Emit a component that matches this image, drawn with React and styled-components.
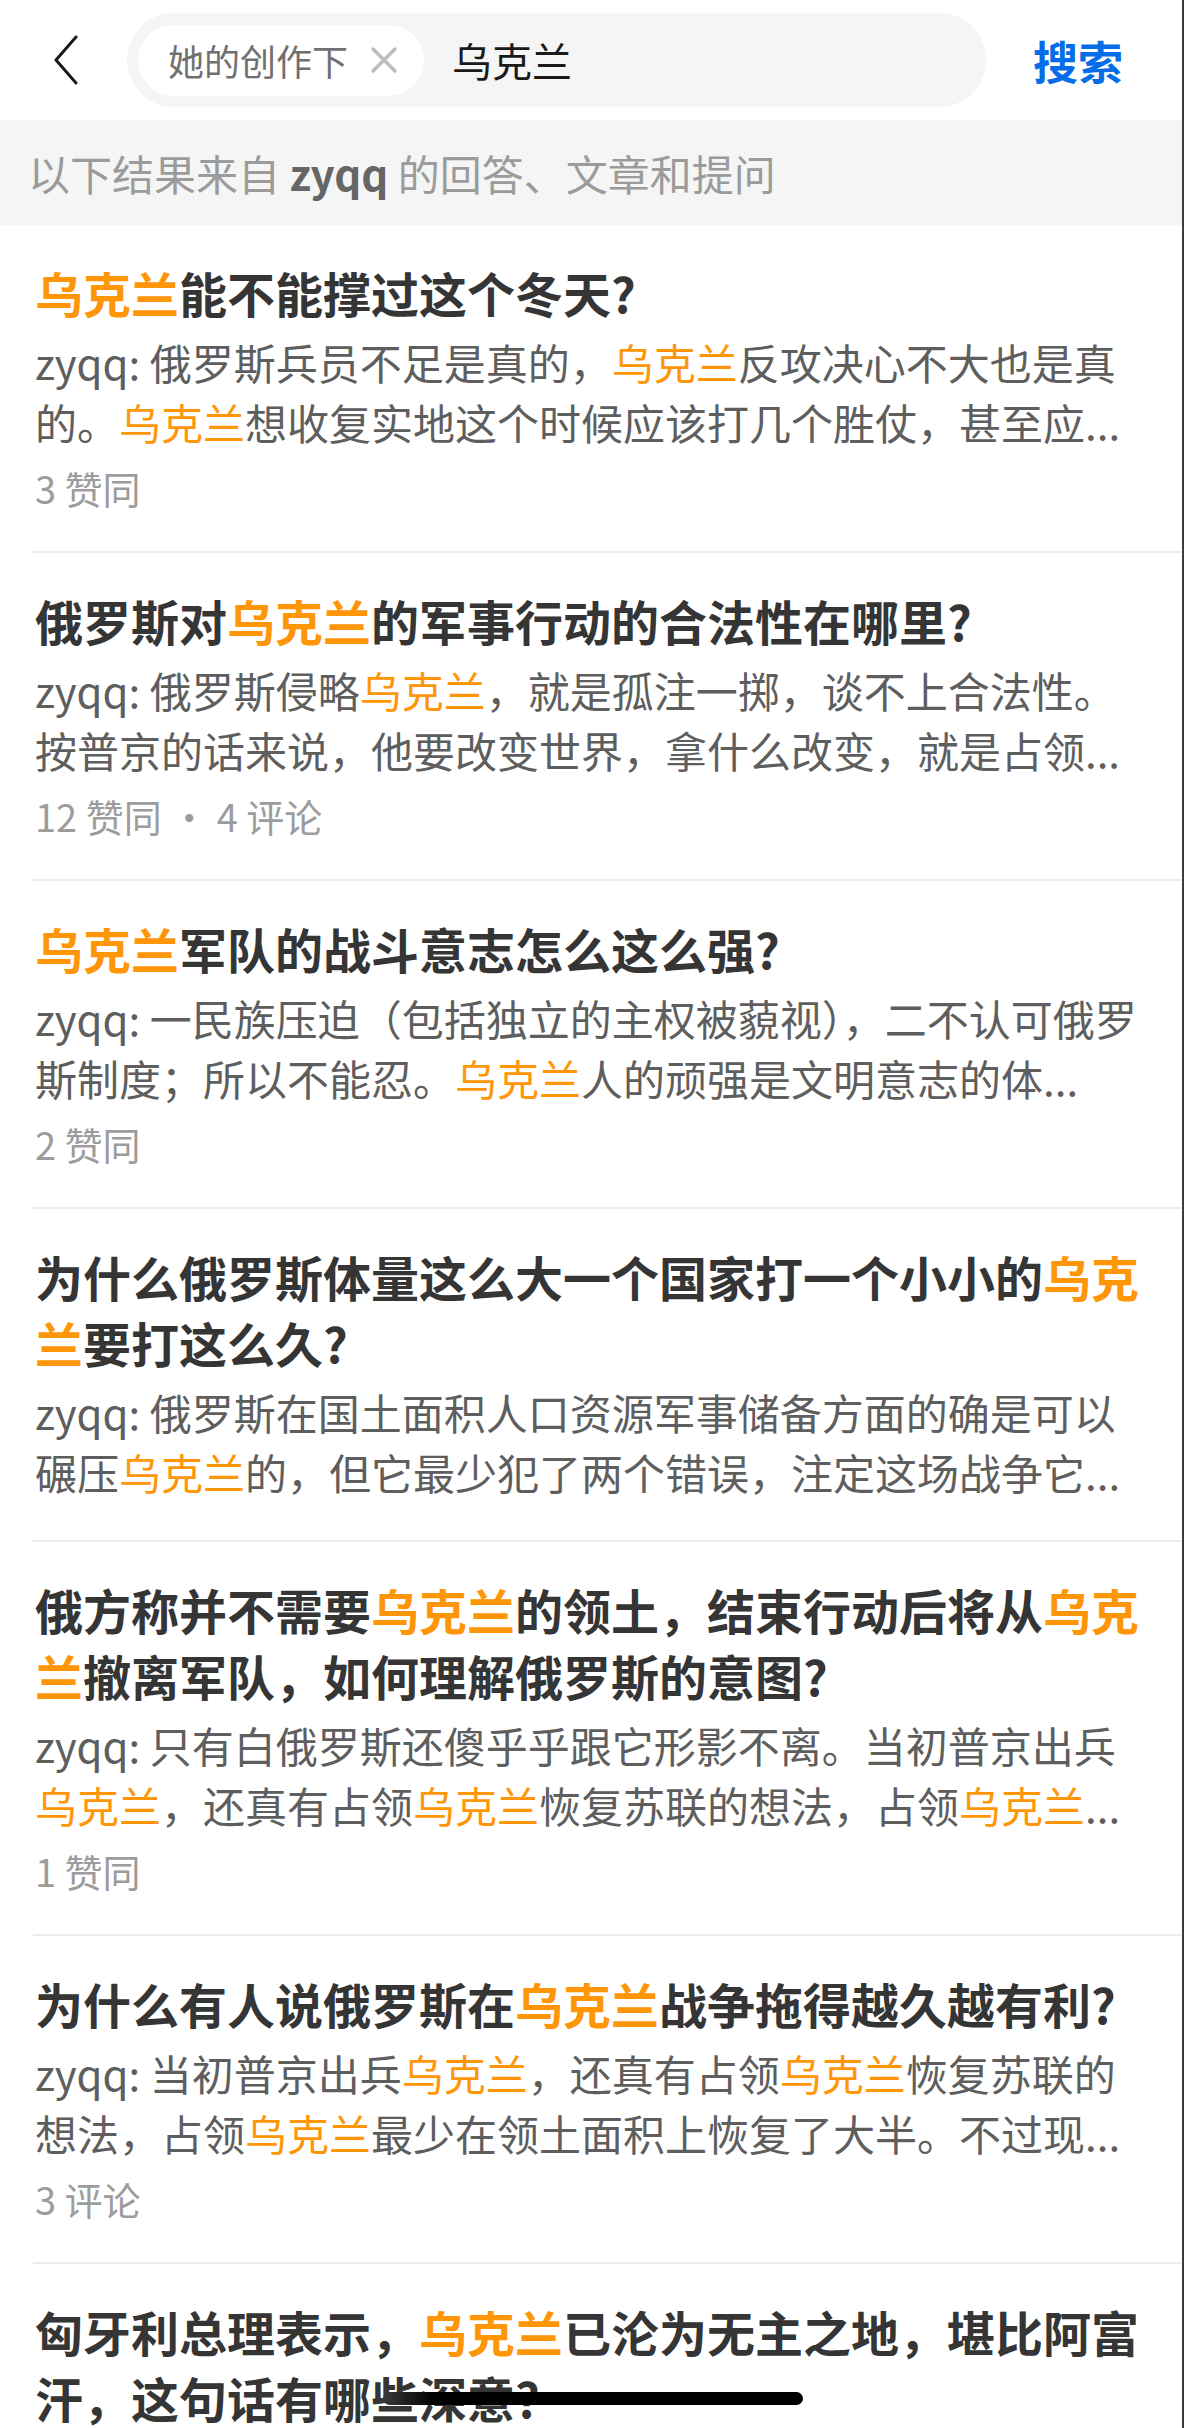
import React from "react";
import styled, { createGlobalStyle } from "styled-components";

const KEYWORD = "乌克兰";

const results = [
    {
        title: "乌克兰能不能撑过这个冬天?",
        excerpt: "俄罗斯兵员不足是真的，乌克兰反攻决心不大也是真的。乌克兰想收复实地这个时候应该打几个胜仗，甚至应",
        meta: "3 赞同",
    },
    {
        title: "俄罗斯对乌克兰的军事行动的合法性在哪里?",
        excerpt: "俄罗斯侵略乌克兰，就是孤注一掷，谈不上合法性。按普京的话来说，他要改变世界，拿什么改变，就是占领",
        meta: "12 赞同 · 4 评论",
    },
    {
        title: "乌克兰军队的战斗意志怎么这么强?",
        excerpt: "一民族压迫（包括独立的主权被藐视），二不认可俄罗斯制度；所以不能忍。乌克兰人的顽强是文明意志的体",
        meta: "2 赞同",
    },
    {
        title: "为什么俄罗斯体量这么大一个国家打一个小小的乌克兰要打这么久?",
        excerpt: "俄罗斯在国土面积人口资源军事储备方面的确是可以碾压乌克兰的，但它最少犯了两个错误，注定这场战争它",
    },
    {
        title: "俄方称并不需要乌克兰的领土，结束行动后将从乌克兰撤离军队，如何理解俄罗斯的意图?",
        excerpt: "只有白俄罗斯还傻乎乎跟它形影不离。当初普京出兵乌克兰，还真有占领乌克兰恢复苏联的想法，占领乌克兰",
        meta: "1 赞同",
    },
    {
        title: "为什么有人说俄罗斯在乌克兰战争拖得越久越有利?",
        excerpt: "当初普京出兵乌克兰，还真有占领乌克兰恢复苏联的想法，占领乌克兰最少在领土面积上恢复了大半。不过现",
        meta: "3 评论",
    },
    {
        title: "匈牙利总理表示，乌克兰已沦为无主之地，堪比阿富汗，这句话有哪些深意?",
        excerpt: "匈牙利总理的说法有他自己的立场，乌克兰的现状确实非常艰难，但是说沦为无主之地",
        meta: "5 赞同",
    },
];

function Highlight({ text }) {
    const parts = text.split(KEYWORD);
    return parts.map((part, i) => (
        <React.Fragment key={i}>
            {i > 0 && <Mark>{KEYWORD}</Mark>}
            {part}
        </React.Fragment>
    ));
}

export default function App() {
    return (
        <>
            <GlobalStyle />
            <Page>
                <Header>
                    <BackButton>
                        <svg width="26" height="50" viewBox="0 0 26 50">
                            <polyline points="23,2 3,25 23,48" fill="none" stroke="#1a1a1a" strokeWidth="3" strokeLinecap="round" strokeLinejoin="round" />
                        </svg>
                    </BackButton>
                    <SearchBox>
                        <Chip>
                            <ChipText>她的创作下</ChipText>
                            <svg width="28" height="28" viewBox="0 0 28 28">
                                <path d="M3 3 L25 25 M25 3 L3 25" stroke="#bdbdbd" strokeWidth="3.5" strokeLinecap="round" />
                            </svg>
                        </Chip>
                        <Query>乌克兰</Query>
                    </SearchBox>
                    <SearchAction>搜索</SearchAction>
                </Header>

                <Notice>
                    以下结果来自 <Author>zyqq</Author> 的回答、文章和提问
                </Notice>

                {results.map((item, i) => (
                    <Item key={i}>
                        <Title>
                            <Highlight text={item.title} />
                        </Title>
                        <Excerpt $hasMeta={!!item.meta}>
                            zyqq: <Highlight text={item.excerpt} />...
                        </Excerpt>
                        {item.meta && <Meta>{item.meta}</Meta>}
                    </Item>
                ))}

                <HomeIndicator />
            </Page>
        </>
    );
}

const GlobalStyle = createGlobalStyle`
    body {
        margin: 0;
        background: #fff;
        font-family: "Noto Sans CJK SC", "Noto Sans", sans-serif;
    }
`;

const Page = styled.div`
    position: relative;
    width: 1184px;
    height: 2428px;
    overflow: hidden;
    box-sizing: border-box;
    border-right: 2px solid #3d3d3d;
    background: #fff;
`;

const Header = styled.div`
    height: 120px;
    display: flex;
    align-items: center;
`;

const BackButton = styled.div`
    flex: none;
    width: 127px;
    height: 100%;
    box-sizing: border-box;
    padding-left: 53px;
    display: flex;
    align-items: center;
`;

const SearchBox = styled.div`
    flex: 0 0 859px;
    height: 94px;
    box-sizing: border-box;
    padding-left: 11px;
    border-radius: 47px;
    background: #f5f5f5;
    display: flex;
    align-items: center;
`;

const Chip = styled.div`
    height: 71px;
    box-sizing: border-box;
    padding: 0 26px 0 30px;
    border-radius: 36px;
    background: #fff;
    display: flex;
    align-items: center;
    gap: 22px;
`;

const ChipText = styled.span`
    font-size: 36px;
    line-height: 1;
    color: #707070;
`;

const Query = styled.span`
    margin-left: 28px;
    font-size: 40px;
    color: #1a1a1a;
`;

const SearchAction = styled.span`
    margin-left: 47px;
    font-size: 45px;
    font-weight: 700;
    color: #056de8;
`;

const Notice = styled.div`
    height: 105px;
    padding-left: 28px;
    background: #f5f5f5;
    display: flex;
    align-items: center;
    font-size: 42px;
    color: #9b9b9b;
    white-space: pre;
`;

const Author = styled.span`
    color: #666;
    font-weight: 600;
`;

const Item = styled.div`
    margin-left: 33px;
    padding: 34px 37px 38px 2px;
    border-bottom: 2px solid #ececec;
`;

const Title = styled.div`
    font-size: 48px;
    line-height: 66px;
    font-weight: 700;
    color: #353535;
    margin-bottom: 7px;
`;

const Excerpt = styled.div`
    font-size: 42px;
    line-height: 60px;
    color: #5e5e5e;
    margin-bottom: ${(p) => (p.$hasMeta ? "10px" : "0")};
    display: -webkit-box;
    -webkit-box-orient: vertical;
    -webkit-line-clamp: 2;
    overflow: hidden;
`;

const Mark = styled.span`
    color: #ff9607;
`;

const Meta = styled.div`
    font-size: 38px;
    line-height: 51px;
    color: #9c9c9c;
`;

const HomeIndicator = styled.div`
    position: absolute;
    left: 383px;
    top: 2392px;
    width: 420px;
    height: 13px;
    border-radius: 7px;
    background: linear-gradient(90deg, #3a3a3a 0%, #000 12%, #000 100%);
`;
